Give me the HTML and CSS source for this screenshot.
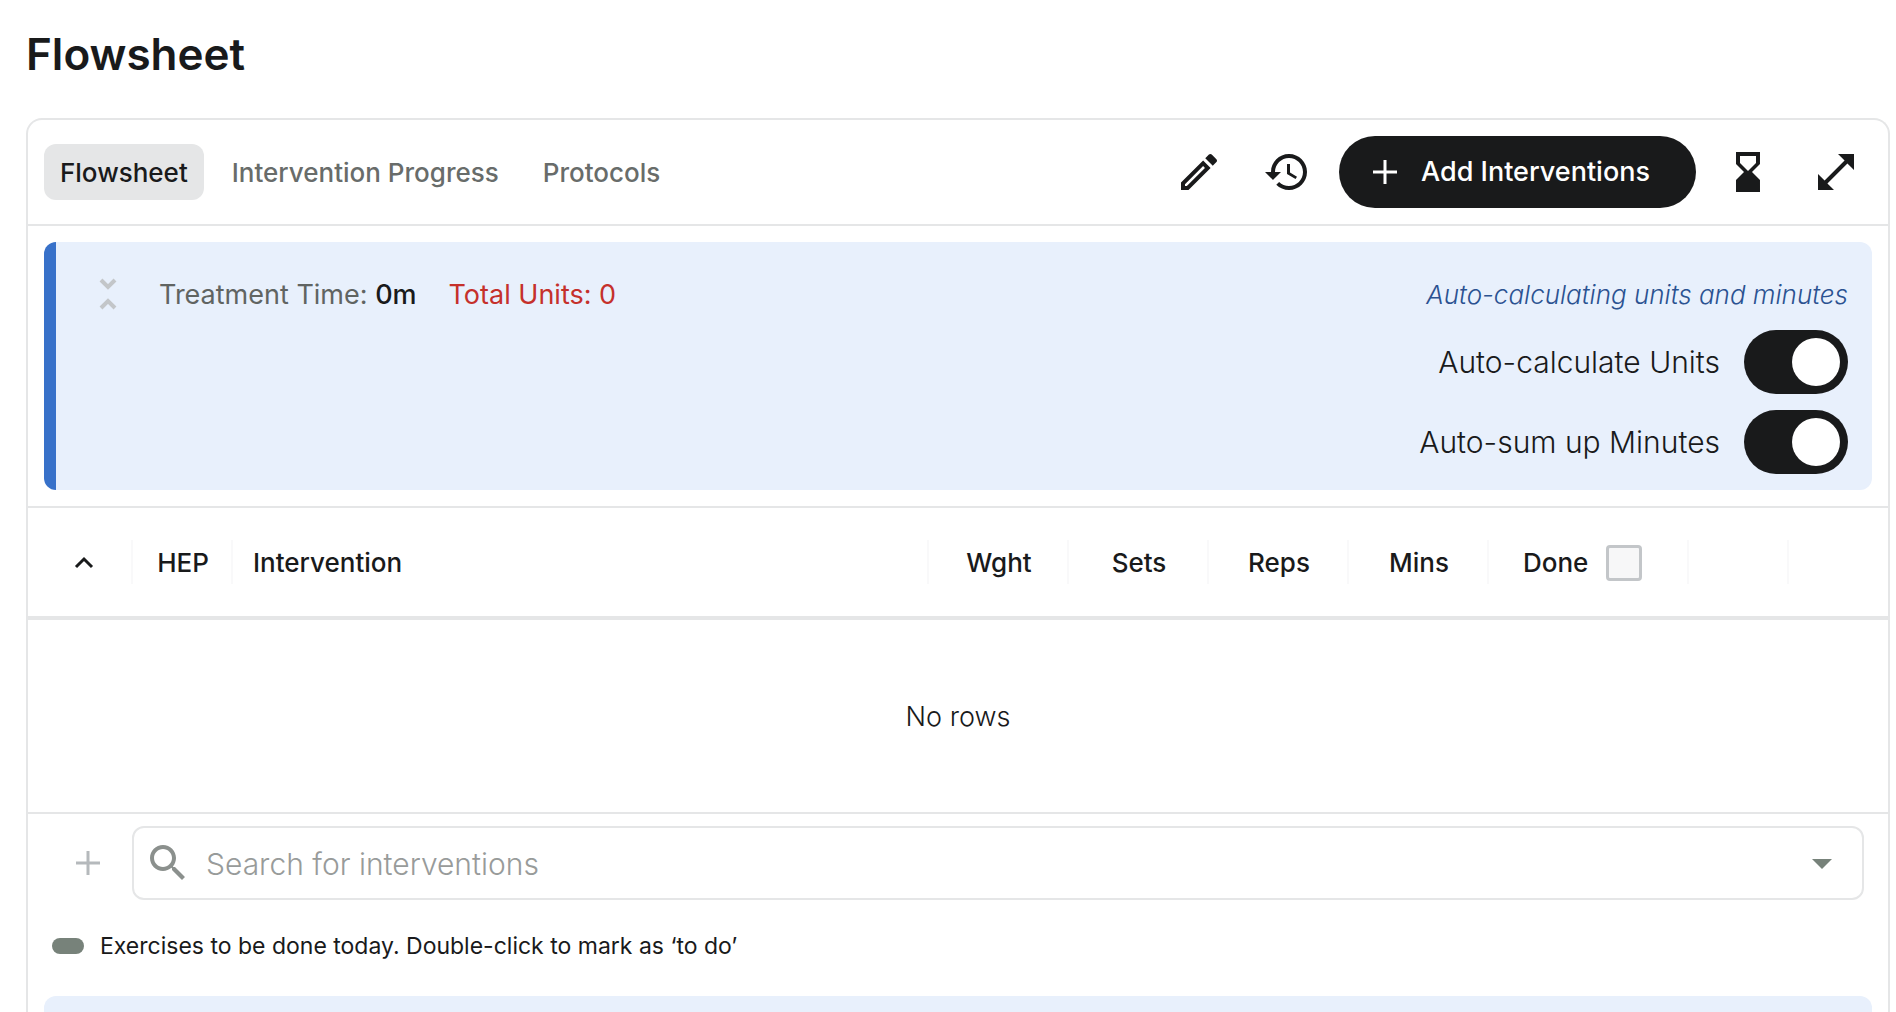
FILE: index.html
```html
<!DOCTYPE html>
<html lang="en">
<head>
  <meta charset="utf-8">
  <title>Flowsheet</title>
  <link rel="stylesheet" href="styles.css">
</head>
<body>
  <main class="page">
    <h1 class="page-title">Flowsheet</h1>
    <section class="card">
      <header class="toolbar">
        <nav class="tabs">
          <button class="tab tab-active" type="button">Flowsheet</button>
          <button class="tab" type="button">Intervention Progress</button>
          <button class="tab" type="button">Protocols</button>
        </nav>
        <div class="actions">
          <button class="icon-button" type="button" aria-label="Edit">
            <svg class="icon" viewBox="0 0 24 24"><path d="M14.06 9.02l.92.92L5.92 19H5v-.92l9.06-9.06M17.66 3c-.25 0-.51.1-.7.29l-1.83 1.83 3.75 3.75 1.83-1.83c.39-.39.39-1.02 0-1.41l-2.34-2.34c-.2-.2-.45-.29-.71-.29zm-3.6 3.19L3 17.25V21h3.75L17.81 9.94l-3.75-3.75z"/></svg>
          </button>
          <button class="icon-button" type="button" aria-label="History">
            <svg class="icon" viewBox="0 0 24 24"><path d="M13 3c-4.97 0-9 4.03-9 9H1l3.89 3.89.07.14L9 12H6c0-3.87 3.13-7 7-7s7 3.13 7 7-3.13 7-7 7c-1.93 0-3.68-.79-4.94-2.06l-1.42 1.42C8.27 19.99 10.51 21 13 21c4.97 0 9-4.03 9-9s-4.03-9-9-9zm-1 5v5l4.28 2.54.72-1.21-3.5-2.08V8H12z"/></svg>
          </button>
          <button class="add-button" type="button">
            <svg class="plus" viewBox="0 0 24 24"><path d="M12 0v24M0 12h24"/></svg>
            Add Interventions
          </button>
          <button class="icon-button" type="button" aria-label="Timer">
            <svg class="icon" viewBox="0 0 24 24"><path d="M18 22l-.01-6L14 12l3.99-4.01L18 2H6v6l4 4-4 3.99V22h12zM8 7.5V4h8v3.5l-4 4-4-4z"/></svg>
          </button>
          <button class="icon-button" type="button" aria-label="Expand">
            <svg class="icon" viewBox="0 0 24 24"><path d="M21 11V3h-8l3.29 3.29-10 10L3 13v8h8l-3.29-3.29 10-10z"/></svg>
          </button>
        </div>
      </header>

      <div class="summary-area">
        <div class="summary">
          <button class="collapse" type="button" aria-label="Collapse">
            <svg class="collapse-icon" viewBox="0 0 18 34"><path d="M2 3l7 7 7-7M2 31l7-7 7 7"/></svg>
          </button>
          <p class="totals">
            <span class="time">Treatment Time: <span class="time-value">0m</span></span>
            <span class="units">Total Units: 0</span>
          </p>
          <div class="settings">
            <em class="note">Auto-calculating units and minutes</em>
            <label class="setting">Auto-calculate Units <input class="switch" type="checkbox" role="switch" checked></label>
            <label class="setting">Auto-sum up Minutes <input class="switch" type="checkbox" role="switch" checked></label>
          </div>
        </div>
      </div>

      <table class="grid">
        <colgroup>
          <col class="col-toggle"><col class="col-hep"><col>
          <col class="col-number"><col class="col-number"><col class="col-number"><col class="col-number">
          <col class="col-done"><col class="col-blank"><col class="col-end">
        </colgroup>
        <thead>
          <tr>
            <th class="split"><button class="sort" type="button" aria-label="Collapse all"><svg class="sort-icon" viewBox="0 0 20 14"><path d="M2 11l8-8 8 8"/></svg></button></th>
            <th class="split">HEP</th>
            <th class="split name">Intervention</th>
            <th class="split">Wght</th>
            <th class="split">Sets</th>
            <th class="split">Reps</th>
            <th class="split">Mins</th>
            <th class="split"><label class="done">Done <input class="check" type="checkbox"></label></th>
            <th class="split"></th>
            <th></th>
          </tr>
        </thead>
        <tbody>
          <tr><td class="empty" colspan="10">No rows</td></tr>
        </tbody>
      </table>

      <div class="search-row">
        <button class="row-add" type="button" aria-label="Add row">
          <svg class="plus" viewBox="0 0 24 24"><path d="M12 0v24M0 12h24"/></svg>
        </button>
        <div class="search">
          <svg class="icon search-icon" viewBox="0 0 24 24"><path d="M15.5 14h-.79l-.28-.27C15.41 12.59 16 11.11 16 9.5 16 5.91 13.09 3 9.5 3S3 5.91 3 9.5 5.91 16 9.5 16c1.61 0 3.09-.59 4.23-1.57l.27.28v.79l5 4.99L20.49 19l-4.99-5zm-6 0C7.01 14 5 11.99 5 9.5S7.01 5 9.5 5 14 7.01 14 9.5 11.99 14 9.5 14z"/></svg>
          <input class="search-input" type="text" placeholder="Search for interventions" aria-label="Search for interventions">
          <button class="drop" type="button" aria-label="Open list">
            <svg class="icon" viewBox="0 0 24 24"><path d="M7 10l5 5 5-5z"/></svg>
          </button>
        </div>
      </div>

      <p class="legend"><span class="legend-mark"></span>Exercises to be done today. Double-click to mark as ‘to do’</p>
      <div class="next-panel"></div>
    </section>
  </main>
</body>
</html>
```
FILE: styles.css
```css
* {
  box-sizing: border-box;
}

body {
  margin: 0;
  background: #fff;
  color: #191a1b;
  font-family: Inter, "Liberation Sans", sans-serif;
  font-size: 27px;
  line-height: 36px;
}

button,
input {
  margin: 0;
  padding: 0;
  border: 0;
  background: none;
  color: inherit;
  font: inherit;
}

svg {
  display: block;
}

.page {
  display: flex;
  flex-direction: column;
  min-height: 100vh;
  padding: 24px 6px 0 26px;
}

.page-title {
  margin: 0 0 34px;
  font-size: 44px;
  line-height: 60px;
  font-weight: 600;
}

.card {
  display: flex;
  flex-direction: column;
  flex: 1;
  border: 2px solid #e5e6e7;
  border-bottom: 0;
  border-radius: 16px 16px 0 0;
}

.toolbar {
  display: flex;
  justify-content: space-between;
  align-items: center;
  padding: 16px 28px 16px 16px;
  border-bottom: 2px solid #e5e6e7;
}

.tabs {
  display: flex;
  gap: 12px;
}

.tab {
  padding: 11px 16px 9px;
  border-radius: 12px;
  color: #686c6a;
  font-size: 26px;
  font-weight: 500;
}

.tab-active {
  background: #e5e6e7;
  color: #191a1b;
}

.actions {
  display: flex;
  align-items: center;
  gap: 40px;
}

.icon {
  width: 48px;
  height: 48px;
  fill: currentColor;
}

.add-button {
  display: flex;
  align-items: center;
  gap: 24px;
  height: 72px;
  margin: 0 -12px;
  padding: 0 46px 0 34px;
  border-radius: 36px;
  background: #191a1b;
  color: #fff;
  font-weight: 500;
}

.plus {
  width: 24px;
  height: 24px;
  fill: none;
  stroke: currentColor;
  stroke-width: 3;
}

.summary-area {
  padding: 16px;
  border-bottom: 2px solid #e5e6e7;
}

.summary {
  display: flex;
  align-items: flex-start;
  padding: 35px 24px 16px 43px;
  border-left: 12px solid #3871c9;
  border-radius: 12px;
  background: #e8f0fc;
}

.collapse-icon {
  width: 18px;
  height: 34px;
  fill: none;
  stroke: #c3c6c9;
  stroke-width: 4;
}

.totals {
  display: flex;
  gap: 32px;
  margin: 0 0 0 42px;
}

.time {
  color: #606462;
}

.time-value {
  color: #191a1b;
  font-weight: 500;
}

.units {
  color: #c5302b;
}

.settings {
  display: flex;
  flex-direction: column;
  align-items: flex-end;
  gap: 16px;
  margin-left: auto;
}

.note {
  margin-bottom: 1px;
  color: #2b5291;
  font-size: 26px;
  font-weight: 300;
}

.setting {
  display: flex;
  align-items: center;
  gap: 24px;
  font-size: 30px;
  font-weight: 300;
}

.switch {
  appearance: none;
  display: flex;
  justify-content: flex-end;
  width: 104px;
  height: 64px;
  padding: 8px;
  border-radius: 32px;
  background: #191a1b;
}

.switch::before {
  content: "";
  width: 48px;
  height: 48px;
  border-radius: 50%;
  background: #fff;
}

.grid {
  width: 100%;
  table-layout: fixed;
  border-collapse: separate;
  border-spacing: 0;
}

.col-toggle {
  width: 105px;
}

.col-hep,
.col-blank {
  width: 100px;
}

.col-number {
  width: 140px;
}

.col-done {
  width: 200px;
}

.col-end {
  width: 99px;
}

th {
  height: 112px;
  padding: 2px 0 0;
  border-bottom: 4px solid #e5e6e7;
  font-size: 26px;
  font-weight: 500;
}

.split {
  background: linear-gradient(#f9f9fa, #f9f9fa) right center / 2px 44px no-repeat;
}

.name {
  padding-left: 20px;
  text-align: left;
}

.sort {
  display: block;
  margin-left: 46px;
}

.sort-icon {
  width: 20px;
  height: 14px;
  fill: none;
  stroke: currentColor;
  stroke-width: 3;
}

.done {
  display: flex;
  align-items: center;
  gap: 18px;
  padding-left: 34px;
}

.check {
  appearance: none;
  width: 36px;
  height: 36px;
  border: 3px solid #c3c6c9;
  border-radius: 4px;
  background: #f7f7f8;
}

.empty {
  height: 194px;
  padding: 2px 0 0;
  border-bottom: 2px solid #e5e6e7;
  font-weight: 300;
  text-align: center;
}

.search-row {
  display: flex;
  align-items: center;
  gap: 32px;
  padding: 12px 24px 12px 48px;
}

.row-add {
  color: #b5b9bc;
}

.search {
  display: flex;
  align-items: center;
  flex: 1;
  height: 74px;
  padding: 0 16px 0 10px;
  border: 2px solid #e5e6e7;
  border-radius: 12px;
}

.search-icon {
  color: #8b908d;
}

.search-input {
  flex: 1;
  min-width: 0;
  padding: 2px 14px 0;
  font-size: 30px;
  font-weight: 300;
}

.search-input::placeholder {
  color: #989b9a;
  opacity: 1;
}

.drop {
  color: #77827a;
}

.legend {
  display: flex;
  align-items: center;
  gap: 16px;
  margin: 16px 0 32px;
  padding: 0 24px;
  font-size: 23px;
}

.legend-mark {
  width: 32px;
  height: 16px;
  border-radius: 8px;
  background: #77827a;
}

.next-panel {
  flex: 1;
  min-height: 16px;
  margin: 0 16px;
  border-radius: 12px 12px 0 0;
  background: #e8f0fc;
}
```
